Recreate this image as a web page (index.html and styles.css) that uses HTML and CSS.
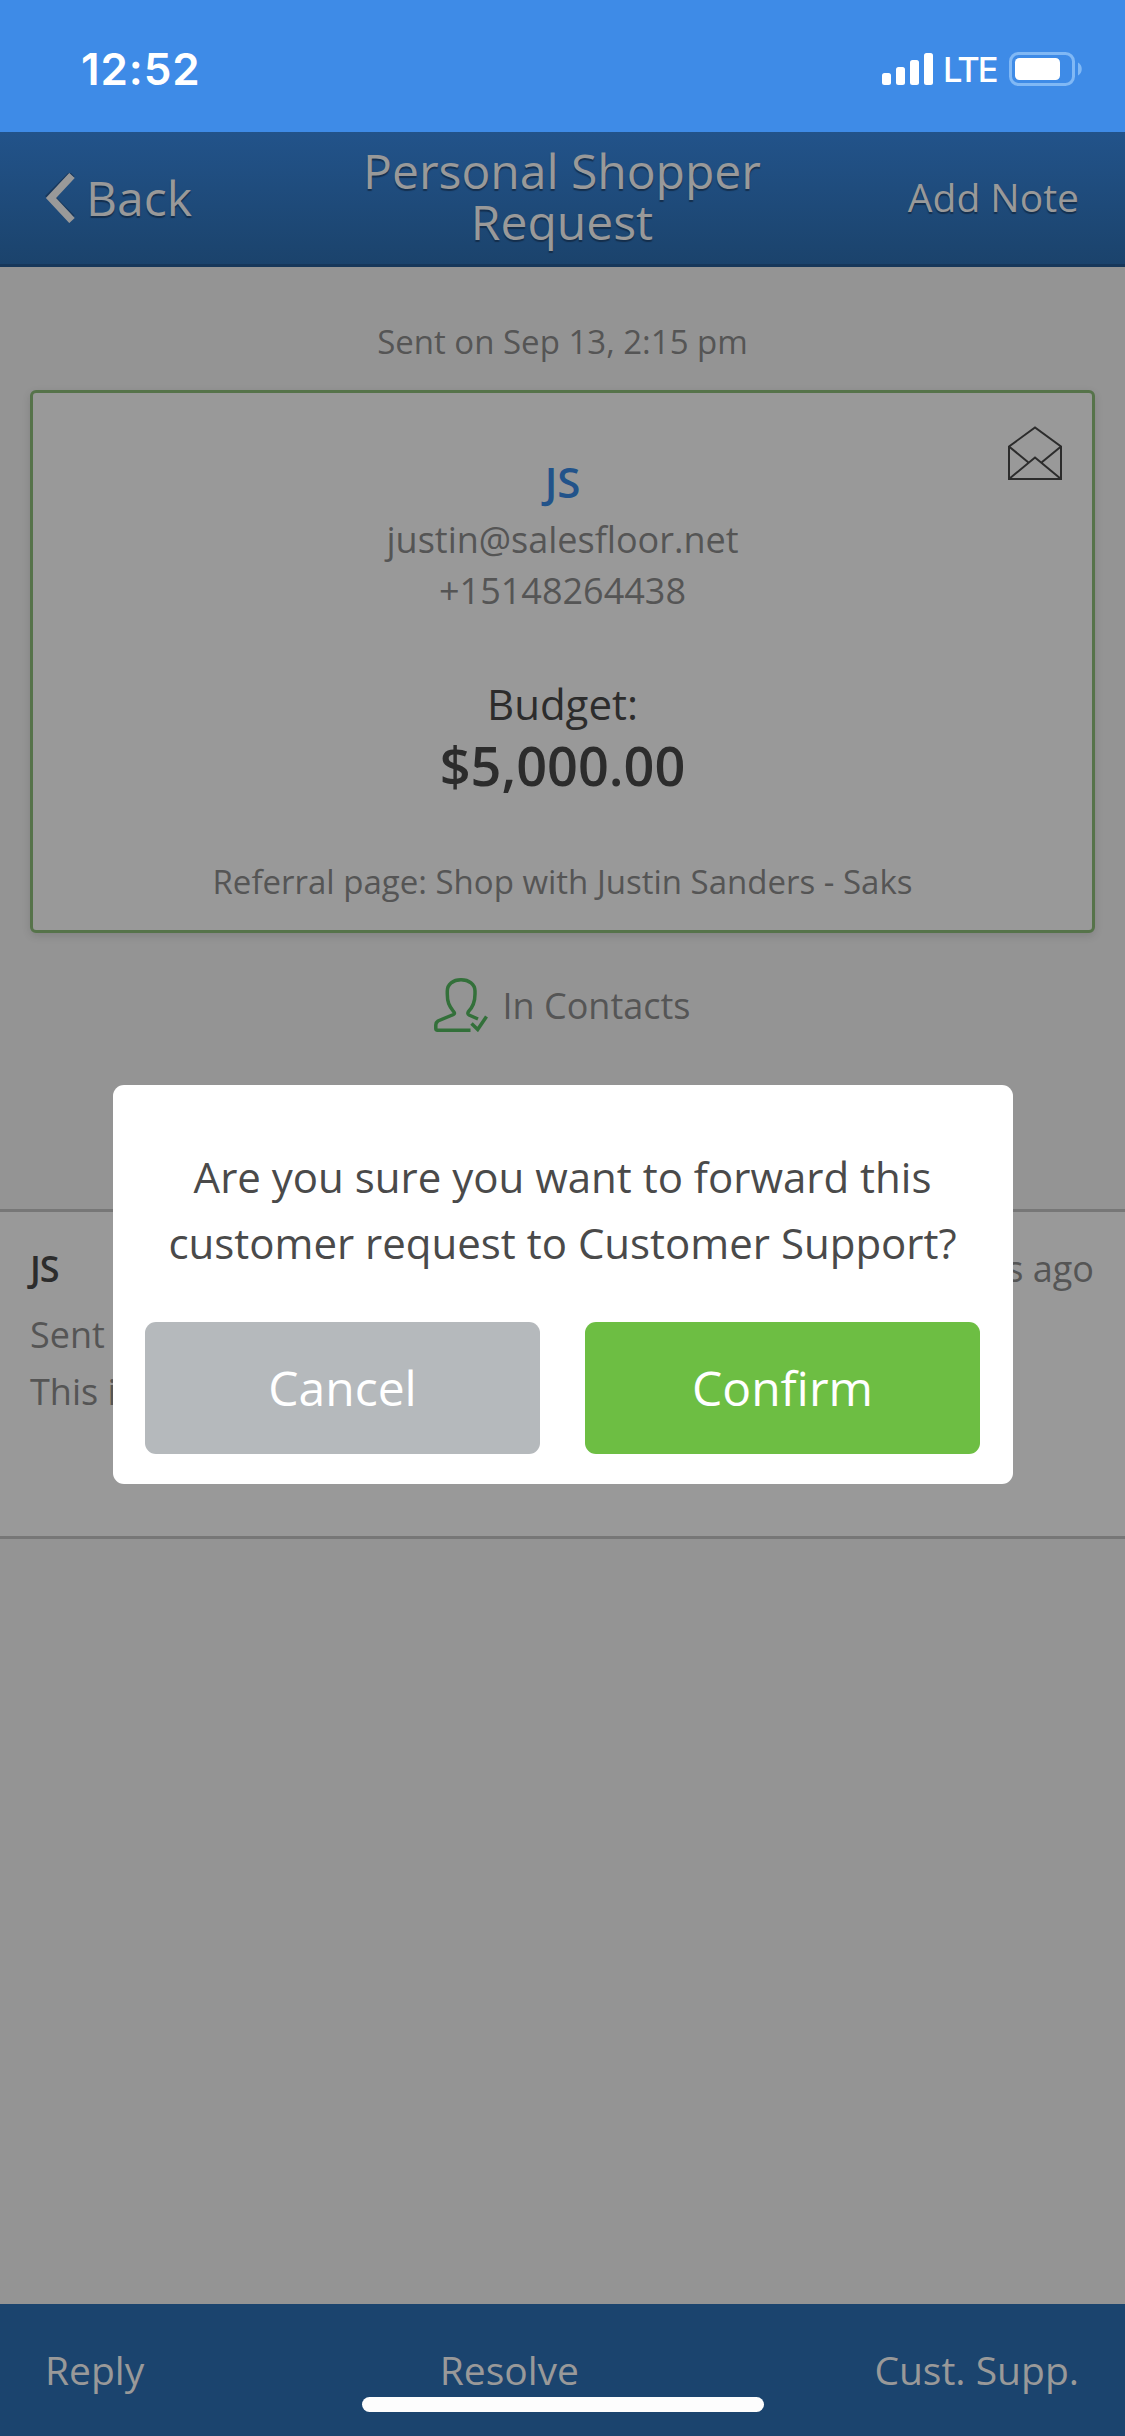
FILE: index.html
```html
<!DOCTYPE html>
<html lang="en">
<head>
<meta charset="utf-8">
<title>Personal Shopper Request</title>
<link rel="stylesheet" href="styles.css">
</head>
<body>
<div class="screen">
  <div class="status">
    <span class="clock">12:52</span>
    <div class="indicators">
      <svg class="signal" width="51" height="32" viewBox="0 0 51 32" fill="#fff">
        <rect x="0" y="20" width="9" height="12" rx="2.5"/>
        <rect x="14" y="14" width="9" height="18" rx="2.5"/>
        <rect x="28" y="7" width="9" height="25" rx="2.5"/>
        <rect x="42" y="0" width="9" height="32" rx="2.5"/>
      </svg>
      <span class="network">LTE</span>
      <svg class="battery" width="73" height="34" viewBox="0 0 73 34">
        <rect x="1.5" y="1.5" width="63" height="31" rx="8" fill="none" stroke="#80b8f5" stroke-width="3"/>
        <rect x="6" y="6" width="45" height="22" rx="4.5" fill="#fff"/>
        <path d="M69 10.5C74 13 74 21 69 23.500Z" fill="#80b8f5"/>
      </svg>
    </div>
  </div>

  <header class="navbar">
    <div class="back">
      <svg width="30" height="50" viewBox="0 0 30 50" fill="none">
        <path d="M27 3L5 25L27 47" stroke="#17375c" stroke-width="7" transform="translate(0 -2)"/>
        <path d="M27 2.500L6 25L27 47.500" stroke="#999" stroke-width="7.500"/>
      </svg>
      <span>Back</span>
    </div>
    <h1 class="title">Personal Shopper<br>Request</h1>
    <span class="add-note">Add Note</span>
  </header>

  <main class="content">
    <p class="date">Sent on Sep 13, 2:15 pm</p>
    <section class="card">
      <svg class="envelope" width="54" height="54" viewBox="0 0 54 54" fill="none" stroke="#2c2c2c" stroke-width="2">
        <path d="M1 20.500L27 1.500L53 20.500V53H1Z"/>
        <path d="M1 20.500L20.500 36.500M53 20.500L33.500 36.500M1 53L27 31.500L53 53"/>
      </svg>
      <div class="customer">JS</div>
      <div class="contact">justin@salesfloor.net</div>
      <div class="contact">+15148264438</div>
      <div class="budget-label">Budget:</div>
      <div class="budget">$5,000.00</div>
      <div class="referral">Referral page: Shop with Justin Sanders - Saks</div>
    </section>
    <div class="in-contacts">
      <svg width="54" height="54" viewBox="0 0 54 54" fill="none" stroke="#33703a" stroke-width="3.500">
        <path d="M36.500 52.200H3.500Q1.800 52.200 1.800 50.500V47Q1.800 44.500 4 43L19.500 36.500Q21.500 35.500 19.500 33.500C15 28 13.300 24 13.300 16V13C13.300 6 19 1.800 27 1.800S41 6 41 13V16C41 24 39 29 34.500 33.500Q33 36 35 37L44 41"/>
        <path d="M37.500 45.500L43.700 51.500L52.500 38.500"/>
      </svg>
      <span>In Contacts</span>
    </div>
    <section class="message">
      <div class="message-head"><b>JS</b><span>s ago</span></div>
      <div class="line">Sent</div>
      <div class="line">This i</div>
    </section>
  </main>

  <footer class="toolbar">
    <span>Reply</span><span>Resolve</span><span>Cust. Supp.</span>
  </footer>

  <div class="home-indicator"></div>

  <div class="dialog">
    <p class="question">Are you sure you want to forward this<br>customer request to Customer Support?</p>
    <div class="actions">
      <button class="button cancel">Cancel</button>
      <button class="button confirm">Confirm</button>
    </div>
  </div>
</div>
</body>
</html>
```
FILE: styles.css
```css
* { box-sizing: border-box; }

body, h1, p { margin: 0; }

body {
  font-family: "Open Sans", "Noto Sans", sans-serif;
  color: #555;
  background: #949494;
}

svg { display: block; flex: none; }

.screen {
  position: relative;
  display: flex;
  flex-direction: column;
  width: 1125px;
  height: 2436px;
  overflow: hidden;
}

/* Status bar */
.status {
  display: flex;
  justify-content: space-between;
  height: 132px;
  padding: 0 43px 0 81px;
  background: #3e8be7;
  color: #fff;
  font-family: Inter, sans-serif;
}

.clock {
  font-size: 44px;
  font-weight: 600;
  letter-spacing: .9px;
  line-height: 138px;
}

.indicators {
  display: flex;
  align-items: center;
  height: 138px;
}

.network {
  width: 76px;
  padding-left: 10px;
  font-size: 34.5px;
  font-weight: 500;
  letter-spacing: -2px;
  line-height: 36px;
  padding-top: 2px;
}

/* Navigation bar */
.navbar {
  display: grid;
  grid-template-columns: 1fr 450px 1fr;
  height: 135px;
  padding: 0 46px 0 45px;
  border-bottom: 3px solid #17375a;
  background: linear-gradient(#22538a, #1b436c);
  color: #999;
  text-shadow: 0 2px 1px rgba(15, 35, 60, .7);
}

.back {
  display: flex;
  align-items: center;
  gap: 11px;
  height: 131px;
  font-size: 48px;
}

.title {
  padding-top: 13px;
  font-size: 48px;
  font-weight: 400;
  line-height: 51px;
  text-align: center;
}

.add-note {
  font-size: 39px;
  line-height: 130px;
  text-align: right;
}

/* Request */
.content {
  flex: 1;
  padding-top: 45px;
}

.date {
  margin-bottom: 18px;
  font-size: 33px;
  line-height: 60px;
  text-align: center;
}

.card {
  position: relative;
  height: 543px;
  margin: 0 30px;
  padding-top: 61px;
  border: 3px solid #56734a;
  border-radius: 6px;
  background: #999;
  box-shadow: 0 3px 8px rgba(0, 0, 0, .12);
  text-align: center;
}

.envelope {
  position: absolute;
  top: 33px;
  right: 30px;
}

.customer {
  margin-bottom: 4px;
  color: #22538a;
  font-size: 42px;
  font-weight: 600;
  line-height: 56px;
}

.contact {
  font-size: 36px;
  line-height: 51px;
}

.budget-label {
  margin-top: 58px;
  color: #2c2c2c;
  font-size: 42px;
  line-height: 60px;
}

.budget {
  color: #2c2c2c;
  font-size: 54px;
  font-weight: 600;
  line-height: 63px;
}

.referral {
  margin-top: 65px;
  font-size: 33px;
  line-height: 40px;
}

.in-contacts {
  display: flex;
  align-items: center;
  justify-content: center;
  gap: 15px;
  height: 54px;
  margin: 45px 0 177px;
  padding-right: 1px;
  font-size: 36px;
}

/* Message thread */
.message {
  height: 330px;
  padding: 28px 31px 0 30px;
  border: solid #777;
  border-width: 3px 0;
  background: #999;
  font-size: 36px;
  line-height: 57px;
}

.message-head {
  display: flex;
  justify-content: space-between;
  margin-bottom: 9px;
}

.message-head b {
  color: #2c2c2c;
  font-weight: 600;
  letter-spacing: -1px;
}

/* Bottom toolbar */
.toolbar {
  display: flex;
  justify-content: space-between;
  height: 132px;
  padding: 0 46px 0 45px;
  background: #1b446e;
  color: #999;
  font-size: 39px;
  line-height: 132px;
}

.home-indicator {
  position: absolute;
  bottom: 24px;
  left: 362px;
  width: 402px;
  height: 15px;
  border-radius: 8px;
  background: #fdfdfd;
}

/* Confirmation dialog */
.dialog {
  position: absolute;
  top: 1085px;
  left: 113px;
  width: 900px;
  height: 399px;
  padding: 59px 33px 30px 32px;
  border-radius: 11px;
  background: #fff;
}

.question {
  margin: 0 -20px 46px;
  color: #4a4a4a;
  font-size: 42px;
  line-height: 66px;
  text-align: center;
}

.actions {
  display: grid;
  grid-template-columns: 1fr 1fr;
  gap: 45px;
}

.button {
  height: 132px;
  padding: 0 0 2px;
  border: 0;
  border-radius: 11px;
  color: #fff;
  font: 400 48px "Open Sans", "Noto Sans", sans-serif;
}

.cancel { background: #b5b9bc; }
.confirm { background: #6dbe43; }
```
